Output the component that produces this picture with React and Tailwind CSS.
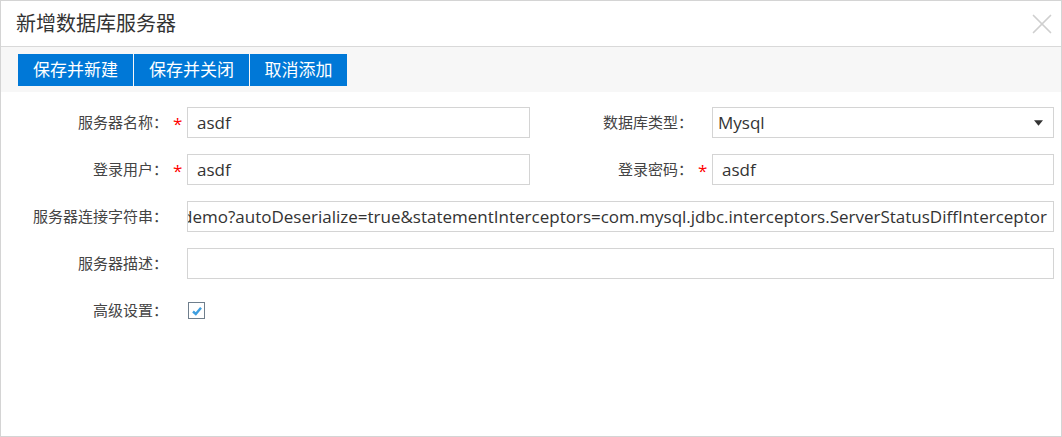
import { X } from 'lucide-react';

const font = { fontFamily: '"Open Sans", "Noto Sans CJK SC", sans-serif' };

function Label({ text, width, required }) {
  return (
    <>
      <div className="text-right text-[15px] text-[#444] shrink-0" style={{ width }}>
        {text}
      </div>
      <div className="w-[19px] shrink-0 text-[#f00] text-[17px] pl-[5px] pt-[2px] leading-none">
        {required ? '*' : ''}
      </div>
    </>
  );
}

function Field({ value, className = '', children }) {
  return (
    <div
      className={`h-[31px] border border-[#d4d4d4] bg-white flex items-center px-[9px] text-[17px] text-[#333] overflow-hidden whitespace-nowrap ${className}`}
    >
      {value}
      {children}
    </div>
  );
}

export default function App() {
  const conn =
    'jdbc:mysql://127.0.0.1:3306/demo?autoDeserialize=true&statementInterceptors=com.mysql.jdbc.interceptors.ServerStatusDiffInterceptor';

  return (
    <div className="w-[1062px] h-[437px] border border-[#d4d4d4] bg-white flex flex-col" style={font}>
      <div className="h-[46px] border-b border-[#d9d9d9] flex items-center justify-between pl-[15px] pr-[2px] shrink-0">
        <span className="text-[20px] text-[#333]">新增数据库服务器</span>
        <X className="w-[34px] h-[34px] text-[#cfcfcf]" strokeWidth={1.2} />
      </div>

      <div className="h-[45px] bg-[#f7f7f7] flex items-center pl-[17px] gap-px shrink-0">
        <button className="h-[32px] w-[115px] bg-[#0078d7] text-white text-[17px]">保存并新建</button>
        <button className="h-[32px] w-[115px] bg-[#0078d7] text-white text-[17px]">保存并关闭</button>
        <button className="h-[32px] w-[97px] bg-[#0078d7] text-white text-[17px]">取消添加</button>
      </div>

      <div className="flex flex-col gap-[16px] pt-[15px]">
        <div className="flex items-center">
          <Label text="服务器名称：" width={167} required />
          <Field value="asdf" className="w-[343px]" />
          <Label text="数据库类型：" width={163} />
          <Field value="Mysql" className="w-[342px] justify-between pl-[5px] pr-[10px]">
            <svg viewBox="0 0 10 6" className="w-[9px] h-[6px]">
              <path d="M0 0 L10 0 L5 6 Z" fill="#333" />
            </svg>
          </Field>
        </div>
        <div className="flex items-center">
          <Label text="登录用户：" width={167} required />
          <Field value="asdf" className="w-[343px]" />
          <Label text="登录密码：" width={163} required />
          <Field value="asdf" className="w-[342px]" />
        </div>
        <div className="flex items-center">
          <Label text="服务器连接字符串：" width={167} />
          <Field value={conn} className="w-[867px] justify-end pr-[6px]" />
        </div>
        <div className="flex items-center">
          <Label text="服务器描述：" width={167} />
          <Field value="" className="w-[867px]" />
        </div>
        <div className="flex items-center h-[31px]">
          <Label text="高级设置：" width={167} />
          <div className="w-[17px] h-[17px] border border-[#6f7e8c] bg-white flex items-center justify-center ml-[1px]">
            <svg viewBox="0 0 12 12" className="w-[12px] h-[12px]">
              <path d="M2 6.5 L4.8 9 L10 2.8" fill="none" stroke="#3d9ee0" strokeWidth="2.4" />
            </svg>
          </div>
        </div>
      </div>
    </div>
  );
}
